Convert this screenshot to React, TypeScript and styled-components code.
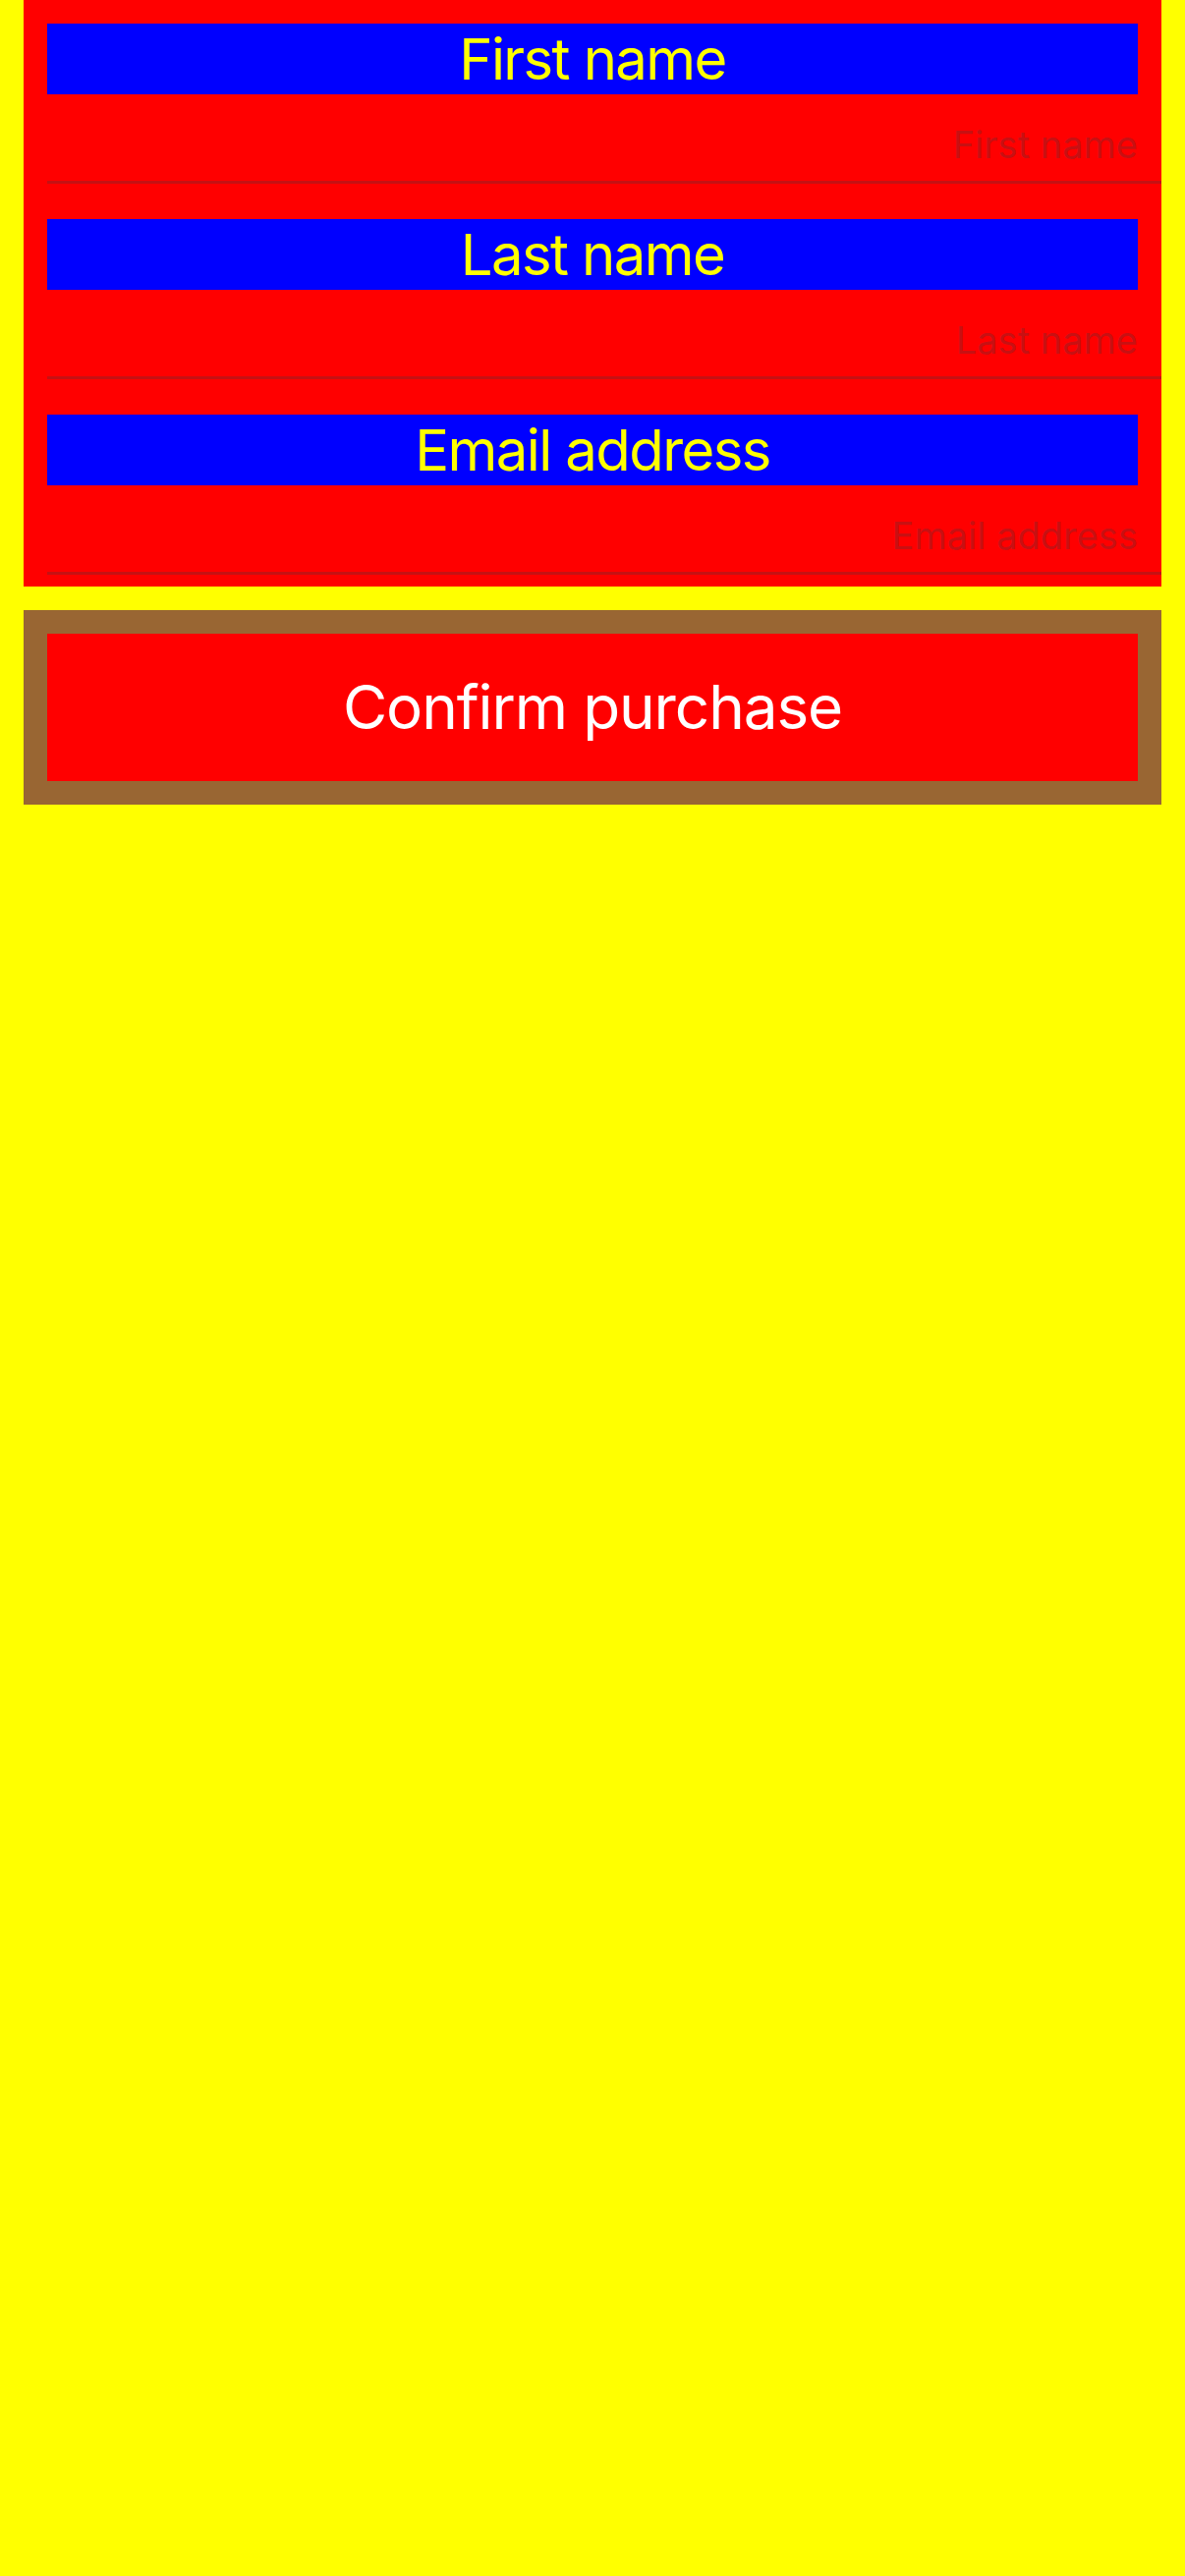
import React from "react";
import styled, { createGlobalStyle } from "styled-components";

const GlobalStyle = createGlobalStyle`
  html, body {
    margin: 0;
    padding: 0;
    background: #ffff00;
  }
  body {
    font-family: Inter, "Noto Sans", "Liberation Sans", sans-serif;
    -webkit-font-smoothing: antialiased;
  }
  * { box-sizing: border-box; }
`;

const Page = styled.main`
  min-height: 2622px;
  background: #ffff00;
  padding: 0 24px;
  display: flex;
  flex-direction: column;
  gap: 24px;
`;

const FormPanel = styled.section`
  background: #ff0000;
  padding: 24px 0 12px 24px;
  display: flex;
  flex-direction: column;
  gap: 36px;
`;

const Field = styled.label`
  display: flex;
  flex-direction: column;
`;

const FieldLabel = styled.span`
  display: flex;
  align-items: center;
  justify-content: center;
  height: 72px;
  margin-right: 24px;
  background: #0000ff;
  color: #ffff00;
  font-size: 58px;
  font-weight: 400;
  letter-spacing: -1.6px;
  line-height: 1;
`;

const InputRow = styled.div`
  height: 91px;
  padding: 28px 24px 14px 0;
  border-bottom: 3px solid rgba(60, 60, 67, 0.29);
`;

const TextInput = styled.input`
  display: block;
  width: 100%;
  height: 46px;
  padding: 0;
  margin: 0;
  border: none;
  outline: none;
  background: transparent;
  text-align: right;
  font-family: inherit;
  font-size: 38px;
  color: #000;
  &::placeholder {
    color: rgba(60, 60, 67, 0.3);
    opacity: 1;
  }
`;

const ButtonFrame = styled.div`
  background: #996633;
  padding: 24px;
`;

const ConfirmButton = styled.button`
  display: flex;
  align-items: center;
  justify-content: center;
  width: 100%;
  height: 150px;
  border: none;
  margin: 0;
  padding: 0;
  background: #ff0000;
  color: #ffffff;
  font-family: inherit;
  font-size: 62px;
  font-weight: 400;
  letter-spacing: -1.1px;
  line-height: 1;
  cursor: pointer;
`;

const fields = ["First name", "Last name", "Email address"];

export default function App() {
  return (
    <>
      <GlobalStyle />
      <Page>
        <FormPanel>
          {fields.map((f) => (
            <Field key={f}>
              <FieldLabel>{f}</FieldLabel>
              <InputRow>
                <TextInput placeholder={f} />
              </InputRow>
            </Field>
          ))}
        </FormPanel>
        <ButtonFrame>
          <ConfirmButton type="button">Confirm purchase</ConfirmButton>
        </ButtonFrame>
      </Page>
    </>
  );
}
